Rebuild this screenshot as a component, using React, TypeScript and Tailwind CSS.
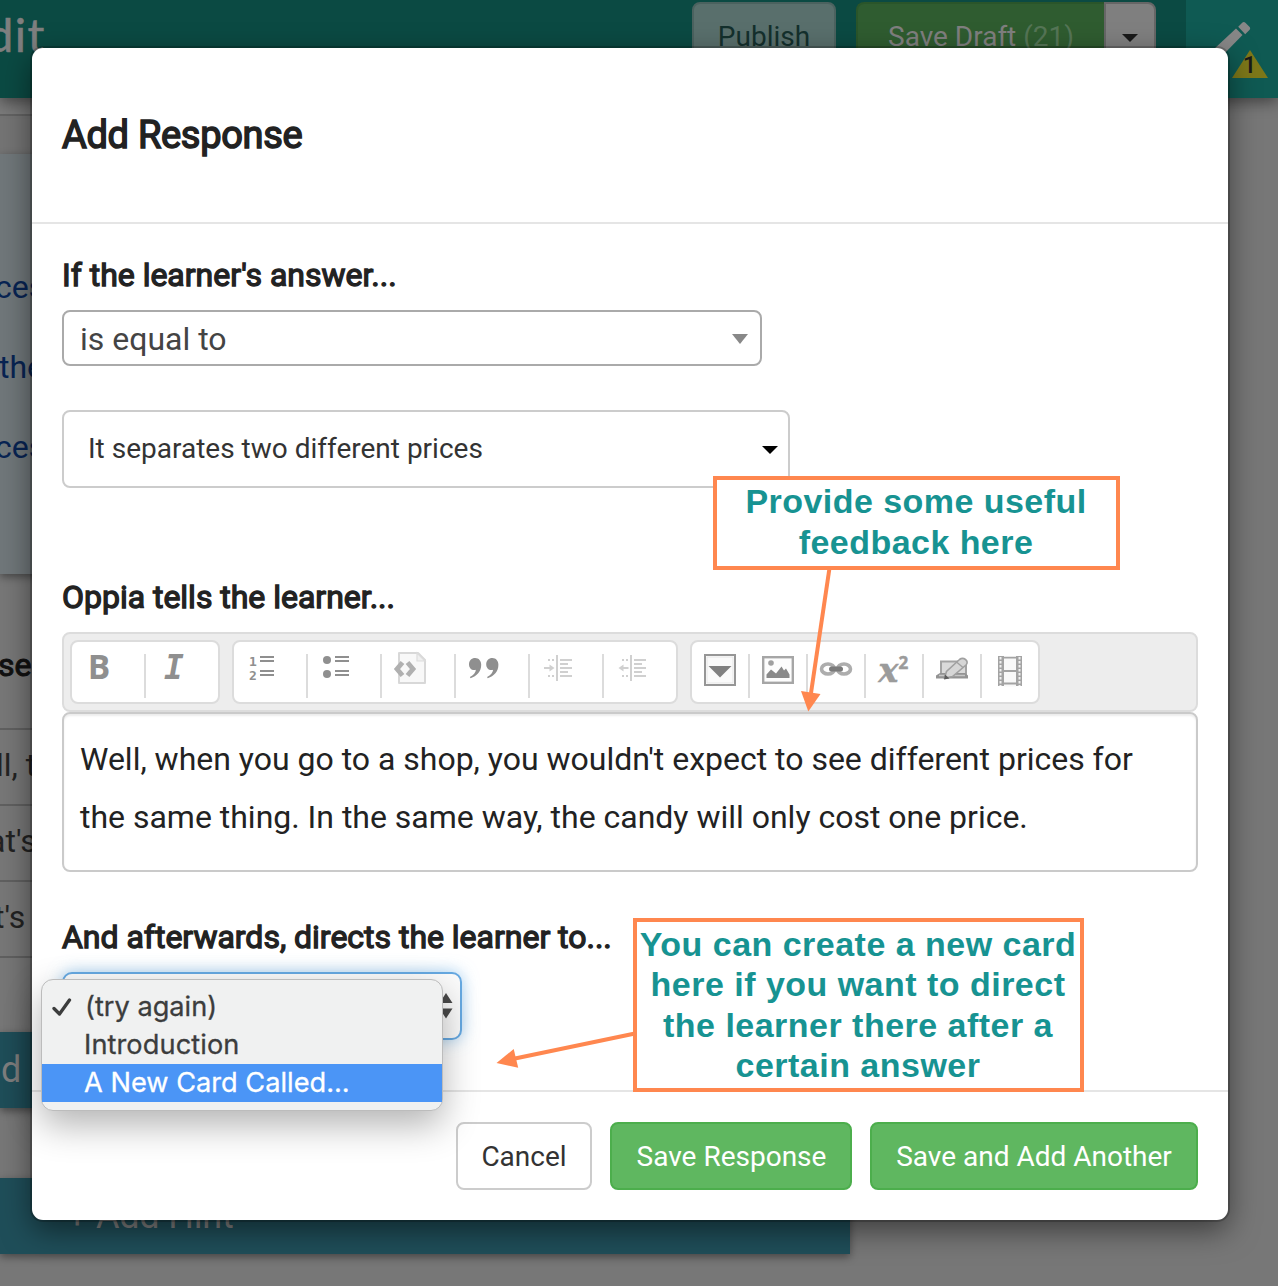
import type { ReactNode } from "react";

const GREY = "#8f8f8f";
const LIGHT = "#d0d0d0";

function ToolButton({ x, w, children }: { x: number; w: number; children: ReactNode }) {
  return (
    <button type="button" className="relative flex shrink-0 items-start">
      <svg width={w} height={60} viewBox={`${x} 642 ${w} 60`}>
        {children}
      </svg>
    </button>
  );
}

function Sep() {
  return <div className="mt-3 h-11 w-0.5 shrink-0 bg-[#dcdcdc]" />;
}

function Group({ children }: { children: ReactNode }) {
  return <div className="flex h-16 shrink-0 rounded-lg border-2 border-[#dcdcdc] bg-white">{children}</div>;
}

function ListLines({ x }: { x: number }) {
  return (
    <g fill={GREY}>
      <rect x={x} y="656" width="14" height="2" />
      <rect x={x} y="660" width="14" height="2" />
      <rect x={x} y="670" width="14" height="2" />
      <rect x={x} y="674" width="14" height="2" />
    </g>
  );
}

function IndentMark({ x, out }: { x: number; out?: boolean }) {
  return (
    <g fill={LIGHT}>
      <rect x={x + 11.5} y="655" width="2" height="26" />
      <rect x={x + 3.5} y="659" width="2" height="2" />
      <rect x={x + 7.5} y="659" width="2" height="2" />
      <rect x={x + 3.5} y="675" width="2" height="2" />
      <rect x={x + 7.5} y="675" width="2" height="2" />
      <rect x={x + 15.5} y="659" width="12" height="2" />
      <rect x={x + 15.5} y="663" width="8" height="2" />
      <rect x={x + 15.5} y="667" width="12" height="2" />
      <rect x={x + 15.5} y="671" width="8" height="2" />
      <rect x={x + 15.5} y="675" width="12" height="2" />
      <rect x={x + (out ? 2 : -0.5)} y="667" width="8" height="2" />
      {out ? <path d={`M${x} 668l5-3.5v7z`} /> : <path d={`M${x + 10} 668l-5-3.5v7z`} />}
    </g>
  );
}

function Toolbar() {
  return (
    <div className="flex h-20 items-start gap-3 rounded-lg border-2 border-[#dcdcdc] bg-[#ededed] px-1.5 pt-1.5">
      <Group>
        <ToolButton x={72} w={72}>
          <text x="87.700" y="679" fontSize="33.500" className="font-['Open_Sans'] font-bold" fill={GREY}>B</text>
        </ToolButton>
        <Sep />
        <ToolButton x={146} w={72}>
          <text x="164" y="679" fontSize="33" className="font-['DejaVu_Sans_Mono'] font-bold italic" fill={GREY}>I</text>
        </ToolButton>
      </Group>
      <Group>
        <ToolButton x={234} w={72}>
          <text x="249" y="665.500" fontSize="13" className="font-['DejaVu_Sans_Mono'] font-bold" fill={GREY}>1</text>
          <text x="249" y="679.500" fontSize="13" className="font-['DejaVu_Sans_Mono'] font-bold" fill={GREY}>2</text>
          <ListLines x={260} />
        </ToolButton>
        <Sep />
        <ToolButton x={308} w={72}>
          <circle cx="327" cy="660" r="4" fill={GREY} />
          <circle cx="327" cy="674" r="4" fill={GREY} />
          <ListLines x={335} />
        </ToolButton>
        <Sep />
        <ToolButton x={382} w={72}>
          <path d="M399 653h19l7 7v23h-26z" fill="#f8f8f8" stroke="#d8d8d8" strokeWidth="2" strokeLinejoin="round" />
          <path d="M417 653v8h8z" fill="#efefef" stroke="#dcdcdc" strokeWidth="1.200" />
          <path d="M402.500 662.500l-5.500 6.500 5.500 6.500M407.500 662.500l5.500 6.500-5.500 6.500" fill="none" stroke="#b0b0b0" strokeWidth="4.800" />
        </ToolButton>
        <Sep />
        <ToolButton x={456} w={72}>
          {[469.5, 486.7].map((q) => (
            <path
              key={q}
              d={`M${q + 5.7} 658c3.600 0 6 2.800 6 6.800 0 6.600-4.400 11.600-10.700 13.400l-.6-1.200c3.600-1.700 5.800-4.300 6-7.200-.5.200-1.100.3-1.700.3-3 0-5.200-2.300-5.200-5.800 0-3.600 2.500-6.300 6.200-6.300z`}
              fill={GREY}
            />
          ))}
        </ToolButton>
        <Sep />
        <ToolButton x={530} w={72}>
          <IndentMark x={544.5} />
        </ToolButton>
        <Sep />
        <ToolButton x={604} w={72}>
          <IndentMark x={618.5} out />
        </ToolButton>
      </Group>
      <Group>
        <ToolButton x={692} w={56}>
          <rect x="705" y="655" width="30" height="30" fill="#fff" stroke="#969696" strokeWidth="2" />
          <rect x="707" y="657" width="26" height="26" fill="#fafafa" stroke="#e6e6e6" />
          <path d="M708.500 666h23l-11.500 11.500z" fill="#808080" />
        </ToolButton>
        <Sep />
        <ToolButton x={750} w={56}>
          <rect x="763.200" y="657.200" width="29.600" height="25.600" fill="#fdfdfd" stroke="#a6a6a6" strokeWidth="2.400" />
          <circle cx="771" cy="663" r="2.800" fill="#a0a0a0" />
          <path d="M766.500 678v-3.500l4.500-5 5 4 5.500-7 2.500 4 2-2 3.500 6v3.500z" fill="#8a8a8a" />
        </ToolButton>
        <Sep />
        <ToolButton x={808} w={56}>
          <ellipse cx="828" cy="669" rx="6.500" ry="5" fill="none" stroke="#adadad" strokeWidth="3.600" />
          <ellipse cx="844" cy="669" rx="6.500" ry="5" fill="none" stroke="#adadad" strokeWidth="3.600" />
          <rect x="829" y="666.500" width="14" height="5" rx="2.500" fill="#7a7a7a" />
        </ToolButton>
        <Sep />
        <ToolButton x={866} w={56}>
          <text x="878.500" y="681.500" fontSize="33" className="font-['DejaVu_Serif'] font-bold italic" fill="#9b9b9b" stroke="#9b9b9b" strokeWidth="0.600">x</text>
          <text x="898.500" y="668.500" fontSize="17" className="font-['Open_Sans'] font-bold" fill="#9b9b9b" stroke="#9b9b9b" strokeWidth="0.500">2</text>
        </ToolButton>
        <Sep />
        <ToolButton x={924} w={56}>
          <path d="M941 675v-13.500h25v13.500z" fill="#dadada" stroke="#a3a3a3" strokeWidth="2" />
          <path d="M936 678.500v-3l4-2.500h25l3 2.500v3z" fill="#939393" />
          <path d="M939 675.500h26" stroke="#c6c6c6" strokeWidth="1.500" />
          <path d="M944.500 678l2-6.500 13-12c2-1.500 4-1.500 6 0s2.200 3.500.5 5.500l-13.500 11.500z" fill="#d6d6d6" stroke="#a0a0a0" strokeWidth="1.600" />
          <path d="M956.500 662l6.500 5.500" stroke="#a0a0a0" strokeWidth="1.400" />
          <path d="M944 679.500l1-5 4.500 4z" fill="#5c5c5c" />
        </ToolButton>
        <Sep />
        <ToolButton x={982} w={56}>
          <rect x="998" y="656" width="24" height="30" fill="#a3a3a3" />
          <rect x="1004" y="658.500" width="12" height="11.500" fill="#f8f8f8" />
          <rect x="1004" y="672" width="12" height="10.500" fill="#f8f8f8" />
          <rect x="1004" y="684.500" width="12" height="2" fill="#f8f8f8" />
          <rect x="1004" y="656" width="12" height="0.800" fill="#f8f8f8" />
          <path d="M1000.500 657v29M1019.500 657v29" stroke="#f0f0f0" strokeWidth="2" strokeDasharray="2.400 1.600" />
        </ToolButton>
      </Group>
    </div>
  );
}

function Backdrop() {
  return (
    <div className="flex h-full flex-col bg-[#777777]">
      <header className="relative z-10 flex h-[98px] shrink-0 items-start bg-[#0b4a43] shadow-[0_4px_14px_rgba(0,0,0,0.45)]">
        <div className="h-full w-[692px] overflow-hidden">
          <div className="-ml-[13px] pt-px font-['Lato'] text-[47px] leading-[66px] tracking-[1.500px] text-[#7f7f7f] [-webkit-text-stroke:0.600px_#7f7f7f]">dit</div>
        </div>
        <div className="mt-0.5 flex h-[68px] w-36 items-center justify-center rounded-lg border-2 border-[#4b625f] bg-[#596f6c] pt-0.5 text-[28px] text-[#14302d]">
          Publish
        </div>
        <div className="mt-0.5 ml-5 flex h-[68px] w-[300px]">
          <div className="flex w-[248px] items-center rounded-l-lg border-2 border-r-0 border-[#2a552a] bg-[#2f5c30] pt-0.5 pl-[30px] text-[28px] whitespace-pre text-[#7f7f7f]">
            Save Draft <span className="text-[#557556]">(21)</span>
          </div>
          <div className="flex flex-1 items-center justify-center rounded-r-lg border-2 border-[#666666] bg-[#7f7f7f]">
            <div className="mt-1 border-x-8 border-t-8 border-x-transparent border-t-[#191919]" />
          </div>
        </div>
        <div className="relative ml-[30px] h-full flex-1 bg-[#0f5a53]">
          <svg className="absolute inset-0" width="92" height="98" viewBox="1186 0 92 98">
            <path d="M1214 55v-6l22-20.500 6.500 6.500L1222 56z" fill="#878787" />
            <path d="M1238.200 26.800l4-4c1-1 2.200-1 3.200 0l4 4c1 1 1 2.200 0 3.200l-4.200 4.200z" fill="#878787" />
            <path d="M1250 50l18 28h-36z" fill="#7d7819" />
            <text x="1249.500" y="73" textAnchor="middle" fontSize="24" className="font-['Roboto'] font-medium" fill="#191919">1</text>
          </svg>
        </div>
      </header>
      <div className="h-4 w-[850px] shrink-0 bg-[#7b7b7b]" />
      <div className="h-10 w-[850px] shrink-0 border-t-2 border-[#646464] bg-[#747474]" />
      <section className="flex h-[420px] w-[850px] shrink-0 flex-col bg-[#70777a] pt-[93px] text-[32px] leading-[80px] text-[#082453] shadow-[0_3px_8px_rgba(0,0,0,0.4)]">
        <div className="-ml-[5px]">ces</div>
        <div className="-ml-px">the</div>
        <div className="-ml-[5px]">ces</div>
      </section>
      <section className="flex h-[458px] w-[850px] shrink-0 flex-col text-[32px] leading-[70px] text-[#222222]">
        <div className="-ml-0.5 h-[154px] pt-[56px] text-[#111111] [-webkit-text-stroke:1px_#111111]">se</div>
        <div className="h-[76px] border-t-2 border-[#606060]"><span className="-ml-[4px]">ll, t</span></div>
        <div className="h-[76px] border-t-2 border-[#606060]"><span className="-ml-[12px]">at's</span></div>
        <div className="h-[76px] border-t-2 border-[#606060]"><span className="-ml-[6px]">t's</span></div>
        <div className="h-[76px] border-t-2 border-[#606060]" />
      </section>
      <div className="h-[76px] w-[850px] shrink-0 bg-[#1f4e59] text-[36px] leading-[76px] text-[#7f7f7f] shadow-[0_3px_8px_rgba(0,0,0,0.4)]">
        <span className="ml-px">d</span>
      </div>
      <div className="mt-[70px] h-[76px] w-[850px] shrink-0 bg-[#1f4e59] pl-[67px] text-[36px] leading-[76px] tracking-[-0.200px] text-[#7f7f7f] shadow-[0_3px_8px_rgba(0,0,0,0.4)]">
        + Add Hint
      </div>
    </div>
  );
}

function Label({ children }: { children: ReactNode }) {
  return <h4 className="h-10 text-[32px] leading-[38px] tracking-[-0.020px] text-[#222222] [-webkit-text-stroke:1.300px_#222222]">{children}</h4>;
}

function DestinationMenu() {
  return (
    <div className="absolute top-[-1px] -left-[23px] h-[132px] w-[402px] overflow-visible rounded-xl border border-[#bcbcbc] bg-[#f0f1f1] pt-2 font-['Inter'] text-[27.200px] leading-[38px] text-[#3c3d3d] shadow-[0_14px_36px_rgba(0,0,0,0.3)] [-webkit-text-stroke:0.300px_currentColor]">
      <div className="flex h-[38px] items-center">
        <svg className="mr-[13px] ml-2.5 shrink-0" width="20" height="20" viewBox="0 0 20 20">
          <path d="M2 11.500l5.500 5.500L17.500 3" fill="none" stroke="#3c3d3d" strokeWidth="3.300" strokeLinecap="round" strokeLinejoin="round" />
        </svg>
        (try again)
      </div>
      <div className="h-[38px] pl-[42px] tracking-[0.080px]">Introduction</div>
      <div className="h-[38px] bg-[#4b95f6] pl-[42px] text-white">A New Card Called...</div>
    </div>
  );
}

export default function App() {
  return (
    <div className="relative h-[1286px] w-[1278px] overflow-hidden font-['Roboto',sans-serif]">
      <Backdrop />
      <div className="absolute top-12 left-8 z-20 flex h-[1172px] w-[1196px] flex-col rounded-[11px] bg-white shadow-[0_0_0_2px_rgba(0,0,0,0.2),0_10px_30px_rgba(0,0,0,0.5)]">
        <div className="flex h-44 shrink-0 items-center border-b-2 border-[#e5e5e5] px-[30px]">
          <h3 className="text-[38px] tracking-[-0.300px] text-[#222222] [-webkit-text-stroke:1.500px_#222222]">Add Response</h3>
        </div>

        <div className="flex h-[866px] shrink-0 flex-col px-[30px] pt-8">
          <Label>If the learner's answer...</Label>
          <div className="mt-3.5 flex h-14 w-[700px] items-center justify-between rounded-lg border-2 border-[#aaaaaa] pt-0.5 pr-3 pl-4 text-[32px] leading-[50px] text-[#444444]">
            is equal to
            <div className="border-x-8 border-t-[10px] border-x-transparent border-t-[#888888]" />
          </div>
          <div className="mt-11 flex h-[78px] w-[728px] items-center justify-between rounded-lg border-2 border-[#cccccc] pr-2.5 pl-6 text-[28px] text-[#333333]">
            It separates two different prices
            <div className="mt-0.5 border-x-8 border-t-8 border-x-transparent border-t-black" />
          </div>

          <div className="mt-[90px]">
            <Label>Oppia tells the learner...</Label>
          </div>
          <div className="mt-3.5">
            <Toolbar />
            <div className="h-40 rounded-lg border-2 border-[#cacaca] bg-white px-4 py-4 text-[32px] leading-[58px] tracking-[-0.010px] text-[#222222] shadow-[inset_0_2px_2px_rgba(0,0,0,0.075)]">
              Well, when you go to a shop, you wouldn't expect to see different prices for the same thing. In the same way, the candy will only cost one price.
            </div>
          </div>

          <div className="mt-[46px]">
            <Label>And afterwards, directs the learner to...</Label>
          </div>
          <div className="relative mt-3.5 h-[68px] w-[400px] rounded-[10px] border-2 border-[#66a9e2] bg-[#fbfbfb] shadow-[0_0_16px_rgba(102,175,233,0.6)]">
            <svg className="absolute top-[18px] right-[7px]" width="14" height="28" viewBox="0 0 14 28">
              <path d="M7 1l6.500 10H.5zM7 26.500L.5 16.500h13z" fill="#4a4a4a" />
            </svg>
            <div className="absolute top-1.5 left-0 z-10">
              <DestinationMenu />
            </div>
          </div>
        </div>

        <div className="flex flex-1 items-start justify-end gap-[18px] border-t-2 border-[#e5e5e5] px-[30px] pt-[30px] text-[28px]">
          <button type="button" className="h-[68px] w-[136px] rounded-lg border-2 border-[#cccccc] bg-white pt-0.5 text-[#333333]">Cancel</button>
          <button type="button" className="h-[68px] w-[242px] rounded-lg border-2 border-[#4cae4c] bg-[#5fb760] pt-0.5 pl-px text-white">Save Response</button>
          <button type="button" className="h-[68px] w-[328px] rounded-lg border-2 border-[#4cae4c] bg-[#5fb760] pt-0.5 text-white">Save and Add Another</button>
        </div>
      </div>

      <svg className="absolute inset-0 z-30" width="1278" height="1286" viewBox="0 0 1278 1286">
        <g fill="#ff874f" stroke="#ff874f">
          <path d="M829.500 568L811 693" strokeWidth="4" fill="none" />
          <path d="M808.300 711.500L801 691l19.500 3z" stroke="none" />
          <path d="M635 1033.500L515 1058.500" strokeWidth="4" fill="none" />
          <path d="M496.500 1063L513.700 1049l4.500 18.700z" stroke="none" />
        </g>
      </svg>
      <div className="absolute top-[476px] left-[713px] z-30 h-[94px] w-[407px] border-4 border-[#ff874f] bg-white pt-px pr-px text-center font-['Liberation_Sans'] text-[34px] leading-[41px] font-bold tracking-[0.450px] whitespace-nowrap text-[#179392]">
        Provide some useful
        <br />
        feedback here
      </div>
      <div className="absolute top-[918px] left-[633px] z-30 h-[174px] w-[451px] border-4 border-[#ff874f] bg-white pt-0.5 pr-px text-center font-['Liberation_Sans'] text-[34px] leading-[40.400px] font-bold tracking-[0.480px] whitespace-nowrap text-[#179392]">
        You can create a new card
        <br />
        here if you want to direct
        <br />
        the learner there after a
        <br />
        certain answer
      </div>
    </div>
  );
}
